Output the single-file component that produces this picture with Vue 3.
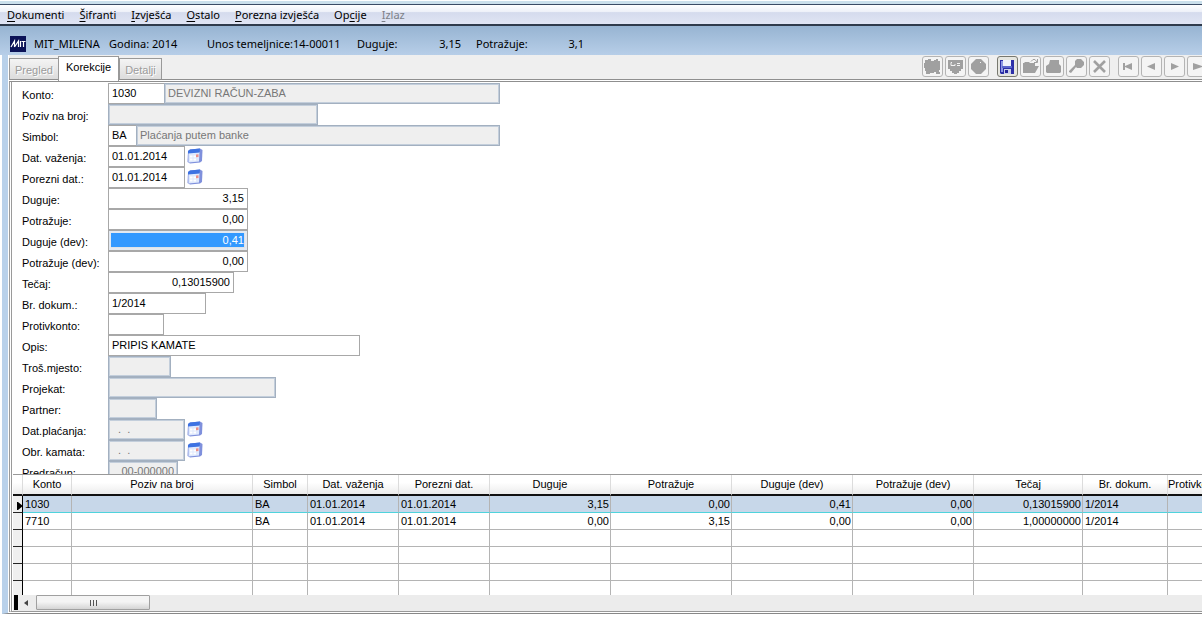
<script setup>
import { ref } from 'vue'

const menu = [
  { pre: '', key: 'D', post: 'okumenti' },
  { pre: '', key: 'Š', post: 'ifranti' },
  { pre: '', key: 'I', post: 'zvješća' },
  { pre: '', key: 'O', post: 'stalo' },
  { pre: '', key: 'P', post: 'orezna izvješća' },
  { pre: 'Op', key: 'c', post: 'ije' },
  { pre: '', key: 'I', post: 'zlaz', off: true }
]

const rows = ref([
  { id: 'konto', label: 'Konto:', value: '1030', size: 'w57', extra: 'DEVIZNI RAČUN-ZABA' },
  { id: 'poziv', label: 'Poziv na broj:', value: '', size: 'w210', off: true },
  { id: 'simbol', label: 'Simbol:', value: 'BA', size: 'w29', extra: 'Plaćanja putem banke' },
  { id: 'datvaz', label: 'Dat. važenja:', value: '01.01.2014', size: 'w77', cal: true },
  { id: 'porez', label: 'Porezni dat.:', value: '01.01.2014', size: 'w77', cal: true },
  { id: 'dug', label: 'Duguje:', value: '3,15', size: 'w140', num: true },
  { id: 'pot', label: 'Potražuje:', value: '0,00', size: 'w140', num: true },
  { id: 'dugdev', label: 'Duguje (dev):', value: '0,41', size: 'w140', num: true, sel: true },
  { id: 'potdev', label: 'Potražuje (dev):', value: '0,00', size: 'w140', num: true },
  { id: 'tecaj', label: 'Tečaj:', value: '0,13015900', size: 'w126', num: true },
  { id: 'dokum', label: 'Br. dokum.:', value: '1/2014', size: 'w98' },
  { id: 'protiv', label: 'Protivkonto:', value: '', size: 'w56' },
  { id: 'opis', label: 'Opis:', value: 'PRIPIS KAMATE', size: 'w252' },
  { id: 'tros', label: 'Troš.mjesto:', value: '', size: 'w63', off: true },
  { id: 'projekat', label: 'Projekat:', value: '', size: 'w168', off: true },
  { id: 'partner', label: 'Partner:', value: '', size: 'w49', off: true },
  { id: 'datpl', label: 'Dat.plaćanja:', value: '  .  .', size: 'w77', off: true, cal: true },
  { id: 'kamata', label: 'Obr. kamata:', value: '  .  .', size: 'w77', off: true, cal: true },
  { id: 'predracun', label: 'Predračun:', value: '00-000000', size: 'w70', off: true, num: true }
])

const columns = [
  { name: 'Konto', cls: 'c-konto' },
  { name: 'Poziv na broj', cls: 'c-poziv' },
  { name: 'Simbol', cls: 'c-simbol' },
  { name: 'Dat. važenja', cls: 'c-date' },
  { name: 'Porezni dat.', cls: 'c-date' },
  { name: 'Duguje', cls: 'c-sum', num: true },
  { name: 'Potražuje', cls: 'c-sum', num: true },
  { name: 'Duguje (dev)', cls: 'c-sum', num: true },
  { name: 'Potražuje (dev)', cls: 'c-sum', num: true },
  { name: 'Tečaj', cls: 'c-tecaj', num: true },
  { name: 'Br. dokum.', cls: 'c-dokum' },
  { name: 'Protivkonto', cls: 'c-protiv' }
]
const data = [
  ['1030', '', 'BA', '01.01.2014', '01.01.2014', '3,15', '0,00', '0,41', '0,00', '0,13015900', '1/2014', ''],
  ['7710', '', 'BA', '01.01.2014', '01.01.2014', '0,00', '3,15', '0,00', '0,00', '1,00000000', '1/2014', ''],
  ...Array.from({ length: 4 }, () => Array(12).fill(''))
]
</script>

<template>
  <div class="app">
    <div class="strip"></div>
    <nav class="menubar">
      <button v-for="m in menu" :key="m.post" type="button" :disabled="m.off">{{ m.pre }}<u>{{ m.key }}</u>{{ m.post }}</button>
    </nav>
    <header class="title">
      <svg class="logo" width="16" height="16" viewBox="0 0 16 16" aria-hidden="true">
        <rect width="16" height="16" fill="#0b1257" />
        <path d="M1 11L4.500 5V11M4.500 11L8.500 5V11M10.500 5V11M11.500 5.500H15.500M13.500 5V11" stroke="#fff" stroke-width="1.200" fill="none" />
      </svg>
      <span class="t-user">MIT_MILENA</span>
      <span class="t-year">Godina: 2014</span>
      <span class="t-doc">Unos temeljnice:14-00011</span>
      <span class="t-name">Duguje:</span>
      <span class="t-num">3,15</span>
      <span class="t-name2">Potražuje:</span>
      <span class="t-num2">3,1</span>
    </header>

    <main class="body">
      <div class="bar">
        <div class="tabs" role="tablist">
          <button type="button" role="tab" class="tab" disabled>Pregled</button>
          <button type="button" role="tab" class="tab active" aria-selected="true">Korekcije</button>
          <button type="button" role="tab" class="tab" disabled>Detalji</button>
        </div>
        <div class="tools">
          <button type="button" disabled aria-label="Karta">
            <svg width="19" height="19" viewBox="0 0 19 19"><path fill="#a0a0a0" d="M2 3H5V2H8V4H11V3H13V2H15V4H17V13H16V15H17V17H13V15H11V16H7V17H3V14H2V11H1V6H2Z" /></svg>
          </button>
          <button type="button" disabled aria-label="Ekran">
            <svg width="19" height="19" viewBox="0 0 19 19"><path fill="#a0a0a0" d="M2 3H17V12H15V14H13V16H11V17H8V16H6V14H4V12H2Z" /><path d="M6 5.500H5V8.500H9V7M11 6.500H14M11 8.500H14" stroke="#f4f4f4" fill="none" /></svg>
          </button>
          <button type="button" disabled aria-label="Stop">
            <svg width="19" height="19" viewBox="0 0 19 19"><path fill="#a0a0a0" d="M7 2H12L17 7V12L12 17H7L2 12V7Z" /><path fill="#f4f4f4" d="M11 5h1v1h-1z" /></svg>
          </button>
          <button type="button" class="group on" aria-label="Spremi">
            <svg width="19" height="19" viewBox="0 0 19 19"><path fill="#2c2fa8" d="M2 3H16V17H3L2 16Z" /><path fill="#8c97e4" d="M3 4H5V15H3Z" /><path fill="#eef1fb" d="M5 3H13V9H5Z" /><path fill="#5a66cc" d="M4 9H14V11H4Z" /><path fill="#c9cee8" d="M6 12H13V17H6Z" /><path fill="#25269a" d="M7 13H10V16H7Z" /></svg>
          </button>
          <button type="button" disabled aria-label="Otvori">
            <svg width="19" height="19" viewBox="0 0 19 19"><path fill="#a0a0a0" d="M2 6H3L4 5H8L9 6H14V9H18L14 16H2Z" /><path d="M10 4.500L12 2.500H14L16 5M16.500 2V5.500H13" stroke="#a0a0a0" fill="none" /></svg>
          </button>
          <button type="button" disabled aria-label="Ispis">
            <svg width="19" height="19" viewBox="0 0 19 19"><path fill="#a0a0a0" d="M6 3H15V7L17 9V15L16 16H3L2 15V9L5 7Z" /></svg>
          </button>
          <button type="button" disabled aria-label="Traži">
            <svg width="19" height="19" viewBox="0 0 19 19"><path fill="#a0a0a0" d="M10 2H14L17 5V8L14 11H10L9 10L4 16L2 15V14L8 8V4Z" /></svg>
          </button>
          <button type="button" disabled aria-label="Briši">
            <svg width="19" height="19" viewBox="0 0 19 19"><path d="M4 4L15 15M15 4L4 15" stroke="#a0a0a0" stroke-width="2.600" /></svg>
          </button>
          <button type="button" disabled class="group" aria-label="Prvi">
            <svg width="19" height="19" viewBox="0 0 19 19"><path fill="#a0a0a0" d="M4 6H6V9L13 6V13L6 10V13H4Z" /></svg>
          </button>
          <button type="button" disabled aria-label="Prethodni">
            <svg width="19" height="19" viewBox="0 0 19 19"><path fill="#a0a0a0" d="M5 9.500L13 6V13Z" /></svg>
          </button>
          <button type="button" disabled aria-label="Sljedeći">
            <svg width="19" height="19" viewBox="0 0 19 19"><path fill="#a0a0a0" d="M14 9.500L6 6V13Z" /></svg>
          </button>
          <button type="button" disabled aria-label="Zadnji">
            <svg width="19" height="19" viewBox="0 0 19 19"><path fill="#a0a0a0" d="M5 6L14 9V6H16V13H14V10L5 13Z" /></svg>
          </button>
        </div>
      </div>

      <form class="form" @submit.prevent>
        <div v-for="r in rows" :key="r.id" class="row">
          <label :for="r.id">{{ r.label }}</label>
          <input :id="r.id" v-model="r.value" type="text" autocomplete="off" :class="[r.size, { num: r.num, sel: r.sel }]" :disabled="r.off">
          <input v-if="r.extra" class="extra" :class="'after-' + r.size" type="text" :value="r.extra" :aria-label="r.label + ' naziv'" disabled>
          <button v-if="r.cal" type="button" class="cal" :aria-label="'Kalendar ' + r.label">
            <svg width="16" height="16" viewBox="0 0 16 16">
              <path fill="#7f90dc" d="M3 1.500L13 0.500L15.500 2L15 13L13 14.500L3 15.500L0.500 14L1 3Z" />
              <path fill="#dfe9fd" d="M1.500 5L12.500 4L12 13.500L1.500 14.500Z" />
              <path fill="#3d72e2" d="M1 3L3 1.500L13 0.500L12.500 4.500L1 5.500Z" />
              <path fill="#fff" d="M3 7.500H5.500V9.500H3ZM6.500 7.500H9V9.500H6.500ZM3 10.500H5.500V12.500H3ZM6.500 10.500H9V12.500H6.500Z" />
              <path fill="#ec8f88" d="M9 6.500L11.500 6.200V9L9 9.200Z" />
            </svg>
          </button>
        </div>
      </form>

      <section class="grid">
        <div class="clip">
          <table>
            <thead>
              <tr>
                <th class="c-mark"></th>
                <th v-for="(c, i) in columns" :key="i" :class="c.cls">{{ c.name }}</th>
              </tr>
            </thead>
            <tbody>
              <tr v-for="(d, i) in data" :key="i" :class="{ current: i === 0 }">
                <td class="mark"><svg v-if="i === 0" width="6" height="8" viewBox="0 0 6 8"><path d="M0 0H1L6 4L1 8H0Z" /></svg></td>
                <td v-for="(v, j) in d" :key="j" :class="{ num: columns[j].num }">{{ v }}</td>
              </tr>
            </tbody>
          </table>
        </div>
        <div class="scroll">
          <span class="block"></span>
          <button type="button" class="arrow" aria-label="Pomak lijevo"><svg width="4" height="6" viewBox="0 0 4 6"><path fill="#444" d="M4 0V6L0 3Z" /></svg></button>
          <div class="thumb"><i></i><i></i><i></i></div>
        </div>
      </section>
    </main>
  </div>
</template>

<style>
body {
  margin: 0;
  overflow: hidden;
  background: #fff;
}
</style>

<style scoped>
.app {
  display: flex;
  flex-direction: column;
  height: 100vh;
  box-sizing: border-box;
  padding-bottom: 3px;
  overflow: hidden;
  background: #fff;
  color: #000;
  font: 11px/17px "Liberation Sans", Arial, sans-serif;
}
button, input {
  font: inherit;
  color: inherit;
  margin: 0;
  padding: 0;
  border: 0;
  border-radius: 0;
  box-sizing: border-box;
  background: none;
}
svg { display: block; }

.strip {
  flex: none;
  height: 3px;
  margin-top: 1px;
  background: #cbe0ec;
}
.menubar {
  flex: none;
  display: flex;
  gap: 15px;
  height: 22px;
  box-sizing: border-box;
  padding-left: 7px;
  border-top: 1px solid #3b4c66;
  border-bottom: 2px solid #2f3b4c;
  background: linear-gradient(#fff, #eef1f9 35%, #d5dbed 40%, #e0e5f4);
  font: 11px/20px "Noto Sans", "Open Sans", sans-serif;
  white-space: nowrap;
}
.menubar button:disabled { color: #7c7f88; }
.menubar u { text-underline-offset: 2px; }

.title {
  flex: none;
  display: flex;
  align-items: center;
  height: 29px;
  box-sizing: border-box;
  padding: 6px 0 0 10px;
  background: linear-gradient(#97b4d2, #b7cee8);
  font: 11px/17px "Noto Sans", "Open Sans", sans-serif;
  white-space: nowrap;
}
.logo { margin-right: 8px; }
.t-user { width: 75px; }
.t-year { width: 98px; }
.t-doc { width: 150px; }
.t-name { width: 64px; }
.t-num { width: 40px; text-align: right; }
.t-name2 { width: 68px; margin-left: 15px; }
.t-num2 { width: 40px; text-align: right; }

.body {
  flex: 1;
  min-height: 0;
  display: flex;
  flex-direction: column;
  margin-left: 2px;
  padding-left: 1px;
  border-left: 6px solid #b9d1ea;
  border-bottom: 1px solid #888;
}
.bar {
  flex: none;
  display: flex;
  justify-content: space-between;
  height: 27px;
  box-sizing: border-box;
  background: #efefef;
  border-bottom: 1px solid #8f8f8f;
  box-shadow: inset 0 -1px #fff, inset 0 -2px #8f8f8f;
  overflow: hidden;
}
.tabs {
  display: flex;
  align-items: flex-end;
  height: 26px;
}
.tab {
  height: 21px;
  margin-bottom: 2px;
  padding: 2px 5px 0;
  border: 1px solid #999;
  border-bottom: 0;
  background: linear-gradient(#f4f4f4, #dcdcdc);
}
.tab:disabled { color: #9b9b9b; text-shadow: 1px 1px #fff; }
.tab.active {
  height: 25px;
  margin: 0 0 0 -1px;
  padding: 0 7px 3px;
  background: #fff;
}
.tools {
  display: flex;
  gap: 2px;
  padding-top: 1px;
  margin-right: -6px;
}
.tools button {
  width: 21px;
  height: 21px;
  border: 1px solid #b4b4b4;
  border-radius: 3px;
  background: #f4f4f4;
}
.tools .group { margin-left: 6px; }
.tools .on { border-color: #77786f; background: #e6e6e0; }

.form {
  flex: 1;
  min-height: 0;
  overflow: hidden;
  padding: 1px 0 0 10px;
  border-left: 3px double #9a9a9a;
}
.row {
  display: flex;
  height: 21px;
}
.row label {
  width: 86px;
  padding-top: 4px;
  white-space: nowrap;
}
.row input {
  height: 21px;
  padding: 0 3px 1px;
  border: 1px solid #a8a8a8;
  background: #fff;
}
.row input:disabled {
  border-color: #a3b0c0;
  background: #efefef;
  box-shadow: inset 0 0 0 1px #c3cedb;
  color: #777;
}
.row .num { text-align: right; }
.row .sel {
  background: #3399ff;
  color: #fff;
  box-shadow: inset 0 0 0 2px #e4eaf2, inset -3px -3px #dfe3e8;
}
.w29 { width: 29px; }
.w49 { width: 49px; }
.w56 { width: 56px; }
.w57 { width: 57px; }
.w63 { width: 63px; }
.w70 { width: 70px; }
.w77 { width: 77px; }
.w98 { width: 98px; }
.w126 { width: 126px; }
.w140 { width: 140px; }
.w168 { width: 168px; }
.w210 { width: 210px; }
.w252 { width: 252px; }
.row .extra { margin-left: -1px; }
.after-w57 { width: 336px; }
.after-w29 { width: 364px; }
.cal { align-self: center; margin: 0 0 2px 2px; }

.grid {
  flex: none;
  margin: 0 0 1px 0;
  padding-left: 1px;
  border-left: 3px double #9a9a9a;
  border-bottom: 1px solid #999;
  overflow: hidden;
}
.clip {
  height: 120px;
  overflow: hidden;
  border-top: 1px solid #999;
}
table {
  width: 1230px;
  table-layout: fixed;
  border-collapse: separate;
  border-spacing: 0;
}
th, td {
  box-sizing: border-box;
  padding: 0 2px;
  overflow: hidden;
  white-space: nowrap;
  text-align: left;
  border-right: 1px solid #b4b4b4;
}
th {
  height: 21px;
  padding: 0;
  font-weight: normal;
  text-align: center;
  border-right-color: #dcdcdc;
  border-bottom: 2px solid #111;
  background: linear-gradient(#fff 40%, #ececec);
}
td {
  height: 17px;
  line-height: 16px;
  border-bottom: 1px solid #b4b4b4;
}
td.num { text-align: right; padding-right: 1px; }
.current td { background: #c7d7e9; border-bottom-color: #4fd3dc; }
td.mark, .current td.mark {
  padding: 4px 0 0 4px;
  background: #efefef;
  border-right: 1px solid #000;
  border-bottom-color: #222;
}
.c-mark { width: 10px; }
.c-konto { width: 49px; }
.c-poziv { width: 181px; }
.c-simbol { width: 55px; }
.c-date { width: 91px; }
.c-sum { width: 121px; }
.c-tecaj { width: 109px; }
.c-dokum { width: 85px; }
.c-protiv { width: 75px; text-align: left; }

.scroll {
  display: flex;
  height: 16px;
  background: #ececec;
}
.block { width: 4px; height: 15px; margin-left: 1px; background: #000; }
.arrow { width: 18px; height: 15px; padding-left: 6px; }
.thumb {
  display: flex;
  align-items: center;
  justify-content: center;
  gap: 2px;
  width: 114px;
  height: 15px;
  box-sizing: border-box;
  border: 1px solid #a0a0a0;
  border-radius: 1px;
  background: linear-gradient(#f4f4f4 45%, #d4d4d4);
}
.thumb i { width: 1px; height: 6px; background: #555; }
</style>
